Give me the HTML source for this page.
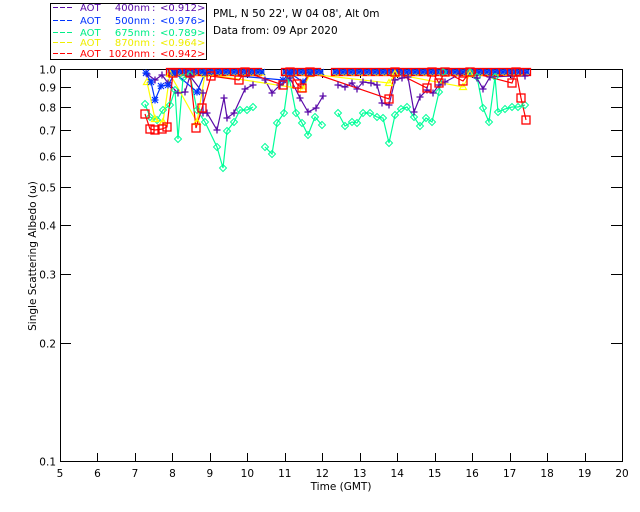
<!DOCTYPE html>
<html><head><meta charset="utf-8"><style>
html,body{margin:0;padding:0;background:#fff;}
svg{display:block;font-family:"DejaVu Sans","Liberation Sans",sans-serif;}
</style></head><body>
<svg id="s" width="640" height="512" viewBox="0 0 640 512" xmlns="http://www.w3.org/2000/svg">
<rect width="640" height="512" fill="#fff"/>
<rect x="50.5" y="3.5" width="156" height="56" fill="none" stroke="#000" stroke-width="1"/>
<g id="leg" font-size="10"></g>
<text x="213" y="17" font-size="10.5">PML, N 50 22', W 04 08', Alt 0m</text>
<text x="213" y="34" font-size="10.5">Data from: 09 Apr 2020</text>
<rect x="60.5" y="69.5" width="562" height="392" fill="none" stroke="#000"/>
<g id="ax" stroke="#000"></g>
<g id="lab" font-size="10.5"></g>
<text x="341" y="490" font-size="10.5" text-anchor="middle">Time (GMT)</text>
<text transform="translate(36,256) rotate(-90)" font-size="10.5" text-anchor="middle">Single Scattering Albedo (ω)</text>
<g id="data"></g>
</svg>
<script>
var NS="http://www.w3.org/2000/svg";
function el(p,t,a,txt){var e=document.createElementNS(NS,t);for(var k in a)e.setAttribute(k,a[k]);if(txt)e.textContent=txt;document.getElementById(p).appendChild(e);return e;}
var L=[["#5a0aa8","400nm","0.912",7],["#0033ff","500nm","0.976",20],["#00ee88","675nm","0.789",32],["#eeee00","870nm","0.964",42],["#ff0000","1020nm","0.942",53]];
L.forEach(function(r){var y=r[3];el("leg","line",{x1:53,y1:y+.5,x2:74,y2:y+.5,stroke:r[0],"stroke-dasharray":"5,2"});
el("leg","text",{x:80,y:y+4,fill:r[0]},"AOT");el("leg","text",{x:150,y:y+4,fill:r[0],"text-anchor":"end"},r[1]);
el("leg","text",{x:152,y:y+4,fill:r[0]},":");el("leg","text",{x:160,y:y+4,fill:r[0]},"<"+r[2]+">");});
function X(t){return 60+37.47*(t-5);}
function Y(v){return 69-392*Math.log10(v);}
for(var h=6;h<=19;h++){var x=Math.round(X(h))+.5;el("ax","line",{x1:x,y1:461,x2:x,y2:453});el("ax","line",{x1:x,y1:70,x2:x,y2:78});}
for(var h=5;h<=20;h++){el("lab","text",{x:X(h),y:477,"text-anchor":"middle"},""+h);}
var vs=[1.0,0.9,0.8,0.7,0.6,0.5,0.4,0.3,0.2,0.1];
vs.forEach(function(v){var y=Math.round(Y(v))+.5;if(v<1&&v>0.1){el("ax","line",{x1:60,y1:y,x2:71,y2:y});el("ax","line",{x1:611,y1:y,x2:622,y2:y});}
el("lab","text",{x:56,y:y+4,"text-anchor":"end"},v.toFixed(1));});
var P="#5a0aa8",B="#0033ff",G="#00ff99",Yl="#ffff00",R="#ff0000";
var green=[[145,104],[150,117],[157,120],[163,110],[170,105],[175,90],[178,139],[183,78],[190,75],[197,110],[205,122],[217,147],[223,168],[227,131],[234,122],[240,110],[247,110],[253,107],[null],[265,147],[272,154],[277,123],[284,113],[289,77],[296,113],[302,123],[308,135],[315,117],[322,125],[null],[338,113],[345,126],[352,122],[357,123],[363,113],[370,113],[377,117],[383,118],[389,143],[395,115],[401,109],[407,107],[414,117],[420,126],[426,118],[432,122],[439,92],[443,72],[470,72],[477,77],[483,108],[489,122],[495,77],[498,112],[505,109],[512,107],[518,107],[525,105]];
var purple=[[147,74],[155,80],[162,75],[168,83],[178,93],[185,92],[190,76],[203,93],[203,113],[207,113],[217,130],[224,98],[227,118],[234,113],[245,89],[253,85],[null],[265,80],[272,93],[280,85],[290,78],[300,98],[308,112],[316,108],[323,96],[null],[338,85],[345,87],[352,83],[357,89],[363,82],[371,83],[377,85],[382,103],[389,105],[395,80],[402,78],[408,77],[414,112],[420,97],[427,90],[433,93],[439,85],[445,82],[460,74],[477,78],[483,89],[490,77],[512,76],[525,76]];
var red=[[145,114],[150,129],[155,130],[162,129],[167,127],[173,73],[190,73],[196,128],[202,108],[211,76],[239,80],[245,72],[283,85],[290,72],[297,84],[302,88],[310,72],[389,99],[395,72],[427,88],[432,72],[439,83],[445,72],[463,81],[470,72],[512,83],[516,72],[521,98],[526,120]];
var yellow=[[147,82],[155,119],[163,122],[170,74],[197,122],[205,74],[303,89],[310,74],[389,83],[395,74],[463,87],[470,74]];
var blue=[[146,73],[151,82],[155,100],[161,86],[168,85],[175,73],[197,92],[205,73],[283,80],[290,73],[303,82],[310,73]];
function line(pts,c){var d="",m=true;pts.forEach(function(p){if(p[0]==null){m=true;return;}d+=(m?"M":"L")+p[0]+" "+p[1];m=false;});el("data","path",{d:d,fill:"none",stroke:c,"stroke-width":1.2});}
function mk(p,c,k,s){if(p[0]==null)return;s=s||3.5;var x=p[0],y=p[1];
if(k=="sq")el("data","rect",{x:x-s,y:y-s,width:2*s,height:2*s,fill:"none",stroke:c,"stroke-width":1.3});
else if(k=="d")el("data","path",{d:"M"+x+" "+(y-s)+"L"+(x+s)+" "+y+"L"+x+" "+(y+s)+"L"+(x-s)+" "+y+"Z",fill:"none",stroke:c,"stroke-width":1});
else if(k=="+")el("data","path",{d:"M"+(x-s)+" "+y+"H"+(x+s)+"M"+x+" "+(y-s)+"V"+(y+s),stroke:c,"stroke-width":1.3});
else if(k=="t")el("data","path",{d:"M"+x+" "+(y-s)+"L"+(x+s)+" "+(y+s-1)+"L"+(x-s)+" "+(y+s-1)+"Z",fill:"none",stroke:c,"stroke-width":1.2});
else if(k=="*")el("data","path",{d:"M"+(x-s)+" "+y+"H"+(x+s)+"M"+x+" "+(y-s)+"V"+(y+s)+"M"+(x-3)+" "+(y-3)+"L"+(x+3)+" "+(y+3)+"M"+(x+3)+" "+(y-3)+"L"+(x-3)+" "+(y+3),stroke:c,"stroke-width":1.2});}
line(green,G);line(purple,P);line(yellow,Yl);line(blue,B);line(red,R);
var ranges=[[170,262],[285,322],[335,528]];
ranges.forEach(function(r){var i=0;for(var x=r[0];x<=r[1];x+=4,i++){mk([x,73],Yl,"t",3);mk([x,72],B,"*",2.5);if(i%2==0)mk([x,72],R,"sq",3.5);}});
green.forEach(function(p){mk(p,G,"d")});purple.forEach(function(p){mk(p,P,"+")});
yellow.forEach(function(p){mk(p,Yl,"t")});blue.forEach(function(p){mk(p,B,"*")});red.forEach(function(p){mk(p,R,"sq",4)});
</script>
</body></html>
